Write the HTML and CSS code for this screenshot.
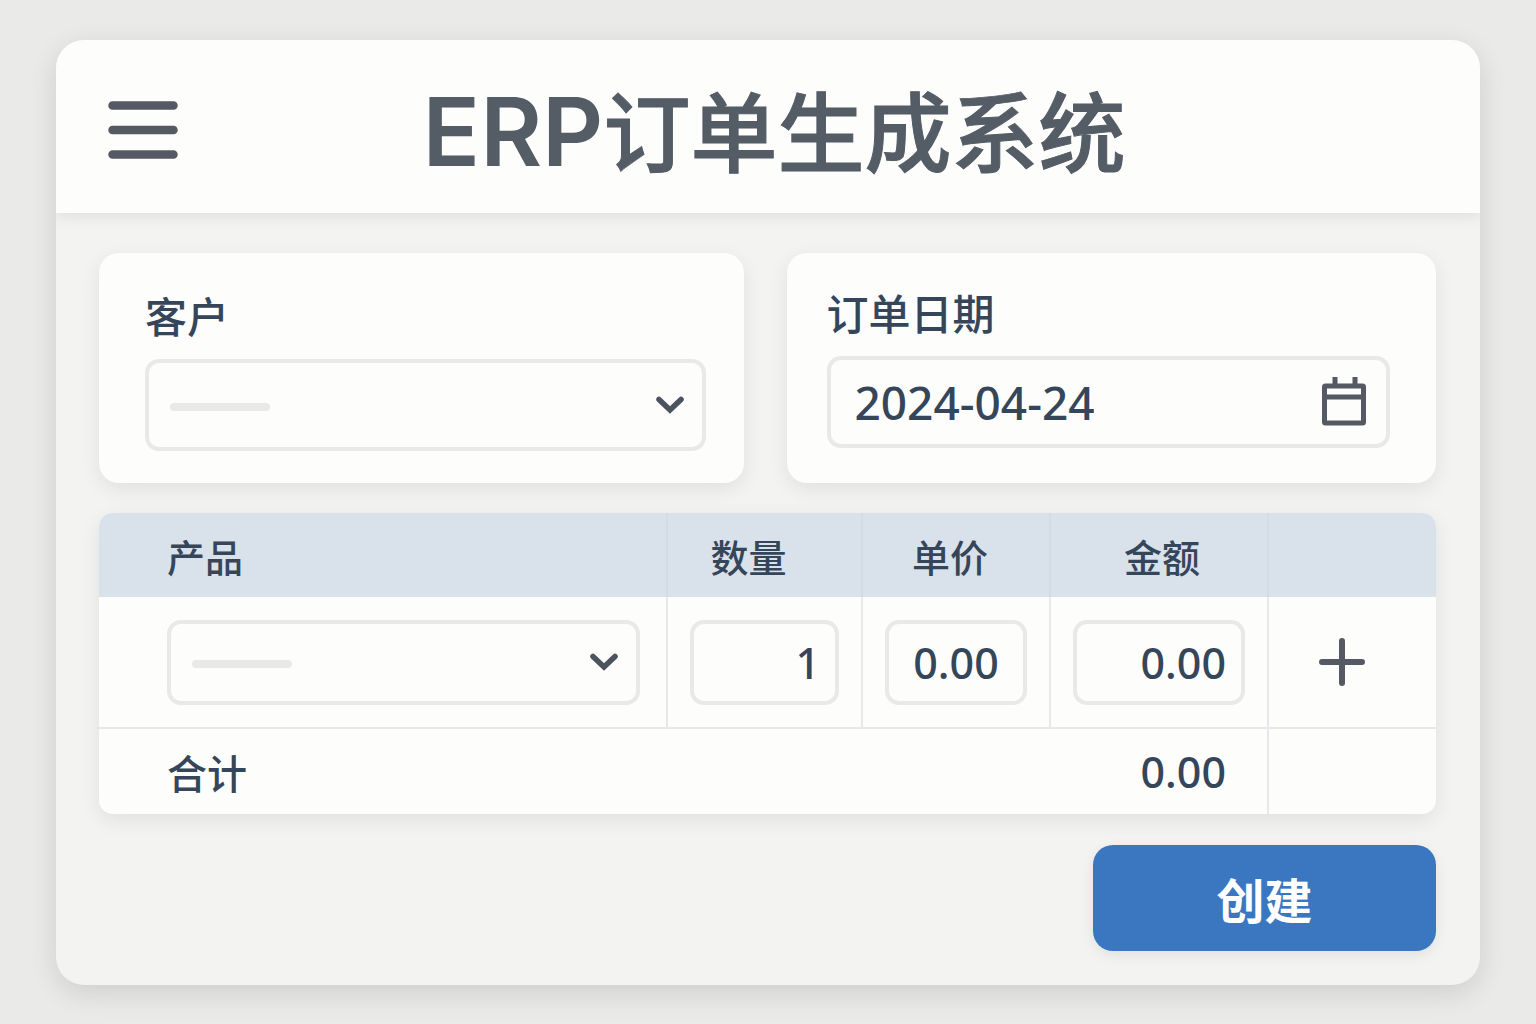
FILE: index.html
```html
<!DOCTYPE html>
<html lang="zh-CN">
<head>
    <meta charset="UTF-8">
    <meta name="viewport" content="width=device-width, initial-scale=1.0">
    <title>ERP订单生成系统</title>
    <link rel="stylesheet" href="styles.css">
</head>
<body>
<div class="container">
    <header class="header">
        <button type="button" class="icon-button" aria-label="菜单">
            <svg width="70" height="58" viewBox="0 0 70 58">
                <path d="M4.5 4.5h61M4.5 29h61M4.5 53.5h61" stroke="currentColor" stroke-width="8.5" stroke-linecap="round"/>
            </svg>
        </button>
        <h1><span class="latin">ERP</span>订单生成系统</h1>
    </header>

    <form class="order-form">
        <div class="cards">
            <div class="card card-customer">
                <label for="customer">客户</label>
                <div class="field select-field">
                    <select id="customer" name="customer">
                        <option value=""></option>
                    </select>
                    <span class="placeholder"></span>
                    <svg class="chevron" width="28" height="18" viewBox="0 0 28 18">
                        <path d="M3 3.5l11 10.5 11-10.5" fill="none" stroke="currentColor" stroke-width="5.5" stroke-linecap="round"/>
                    </svg>
                </div>
            </div>
            <div class="card card-date">
                <label for="orderDate">订单日期</label>
                <div class="field date-field">
                    <input type="text" id="orderDate" name="orderDate" value="2024-04-24">
                    <button type="button" class="icon-button" aria-label="选择日期">
                        <svg width="44" height="50" viewBox="0 0 44 50">
                            <path d="M13 0v8M33 0v8" stroke="currentColor" stroke-width="5"/>
                            <rect x="2.5" y="9" width="39" height="37" rx="1" fill="none" stroke="currentColor" stroke-width="5"/>
                            <path d="M3 20h38" stroke="currentColor" stroke-width="5"/>
                        </svg>
                    </button>
                </div>
            </div>
        </div>

        <div class="table-box">
            <table>
                <thead>
                    <tr>
                        <th class="col-product">产品</th>
                        <th class="col-quantity">数量</th>
                        <th class="col-price">单价</th>
                        <th class="col-amount">金额</th>
                        <th class="col-action"></th>
                    </tr>
                </thead>
                <tbody>
                    <tr>
                        <td>
                            <div class="field select-field">
                                <select name="product" aria-label="产品">
                                    <option value=""></option>
                                </select>
                                <span class="placeholder"></span>
                                <svg class="chevron" width="28" height="18" viewBox="0 0 28 18">
                                    <path d="M3 3.5l11 10.5 11-10.5" fill="none" stroke="currentColor" stroke-width="5.5" stroke-linecap="round"/>
                                </svg>
                            </div>
                        </td>
                        <td><input type="text" class="field number" name="quantity" aria-label="数量" value="1"></td>
                        <td><input type="text" class="field number price" name="price" aria-label="单价" value="0.00"></td>
                        <td><input type="text" class="field number" name="amount" aria-label="金额" value="0.00"></td>
                        <td class="action">
                            <button type="button" class="icon-button" aria-label="添加">
                                <svg width="46" height="48" viewBox="0 0 46 48">
                                    <path d="M3 24h40M23 3v42" stroke="currentColor" stroke-width="6" stroke-linecap="round"/>
                                </svg>
                            </button>
                        </td>
                    </tr>
                </tbody>
                <tfoot>
                    <tr>
                        <th colspan="3">合计</th>
                        <td class="total">0.00</td>
                        <td></td>
                    </tr>
                </tfoot>
            </table>
        </div>

        <button type="submit" class="submit">创建</button>
    </form>
</div>
</body>
</html>
```
FILE: styles.css
```css
* {
    box-sizing: border-box;
}

body {
    margin: 0;
    padding: 40px 56px;
    background-color: #eaeae8;
    color: #36465a;
    font-family: "Noto Sans", "Noto Sans CJK SC", sans-serif;
    font-weight: 500;
}

.container {
    border-radius: 28px;
    background-color: #f3f3f1;
    box-shadow: 0 8px 28px rgba(0, 0, 0, 0.12);
    overflow: hidden;
}

.header {
    display: grid;
    grid-template-columns: 70px 1fr 70px;
    align-items: center;
    height: 173px;
    padding: 6px 52px 0;
    background-color: #fdfdfc;
    color: #545c66;
    box-shadow: 0 2px 16px rgba(0, 0, 0, 0.1);
}

h1 {
    margin: 0;
    padding-left: 12px;
    font-family: "Noto Sans CJK SC", sans-serif;
    font-size: 87px;
    font-weight: 500;
    line-height: 120px;
    text-align: center;
    white-space: nowrap;
    -webkit-text-stroke: 1px currentColor;
}

.latin {
    font-family: Inter, sans-serif;
    font-size: 95px;
    font-weight: 600;
    -webkit-text-stroke: 0;
}

.icon-button {
    display: block;
    padding: 0;
    border: none;
    background: none;
    color: #545963;
    cursor: pointer;
}

.icon-button svg {
    display: block;
}

.order-form {
    display: flex;
    flex-direction: column;
    padding: 40px 44px 34px 43px;
}

.cards {
    display: grid;
    grid-template-columns: minmax(0, 129fr) minmax(0, 130fr);
    gap: 43px;
    margin-bottom: 30px;
}

.card {
    border-radius: 20px;
    background-color: #fdfdfc;
    box-shadow: 0 6px 20px rgba(0, 0, 0, 0.08);
}

.card-customer {
    padding: 34px 38px 32px 46px;
}

.card-date {
    padding: 31px 46px 35px 40px;
}

.card label {
    display: block;
    margin-bottom: 12px;
    font-size: 42px;
    line-height: 60px;
}

.field {
    width: 100%;
    height: 85px;
    border: 4px solid #e9e9e8;
    border-radius: 14px;
    background-color: #fdfdfc;
}

.card .field {
    height: 92px;
}

select,
input {
    color: inherit;
    font: inherit;
    outline: none;
}

/* The select, its placeholder bar and the arrow share one grid cell */
.select-field {
    display: grid;
    align-items: center;
}

.select-field > * {
    grid-area: 1 / 1;
}

.select-field select {
    width: 100%;
    height: 100%;
    border: none;
    appearance: none;
    background: none;
    cursor: pointer;
}

.placeholder {
    width: 100px;
    height: 8px;
    margin: 4px 0 0 21px;
    border-radius: 4px;
    background-color: #e9e9e8;
    pointer-events: none;
}

.chevron {
    justify-self: end;
    margin-right: 18px;
    color: #4b535f;
    pointer-events: none;
}

.date-field {
    display: flex;
    align-items: center;
    padding: 0 20px 0 24px;
}

.date-field input {
    flex: 1;
    min-width: 0;
    padding: 0;
    border: none;
    background: none;
    font-size: 46px;
}

.table-box {
    border-radius: 14px;
    background-color: #fdfdfc;
    box-shadow: 0 6px 20px rgba(0, 0, 0, 0.08);
    overflow: hidden;
}

table {
    width: 100%;
    border-collapse: separate;
    border-spacing: 0;
    table-layout: fixed;
}

th,
td {
    padding: 0 22px;
    border-left: 2px solid #e6e8e9;
    font-weight: 500;
}

tr > :first-child {
    padding-right: 26px;
    padding-left: 68px;
    border-left: none;
    text-align: left;
}

thead th {
    height: 84px;
    border-color: #d2dbe6;
    background-color: #d9e1eb;
    font-size: 38px;
}

thead .col-quantity {
    width: 195px;
    padding-right: 54px;
}

thead .col-price {
    width: 188px;
    padding-right: 34px;
}

thead .col-amount {
    width: 218px;
    padding-left: 28px;
}

thead .col-action {
    width: 169px;
}

tbody td {
    height: 130px;
}

.number {
    display: block;
    padding: 0 15px;
    font-size: 43px;
    text-align: right;
}

.price {
    text-align: center;
}

.action .icon-button {
    margin: 0 auto;
    padding-right: 22px;
}

tfoot th,
tfoot td {
    height: 87px;
    border-top: 2px solid #e6e8e9;
    font-size: 40px;
}

tfoot .total {
    padding-right: 41px;
    border-left: none;
    font-size: 43px;
    text-align: right;
}

.submit {
    align-self: flex-end;
    width: 343px;
    height: 106px;
    margin-top: 31px;
    border: none;
    border-radius: 20px;
    background-color: #3a77c0;
    color: #fff;
    box-shadow: 0 4px 14px rgba(0, 0, 0, 0.08);
    font-family: inherit;
    font-size: 48px;
    font-weight: 700;
    cursor: pointer;
}

.submit:hover {
    background-color: #3169ad;
}
```
